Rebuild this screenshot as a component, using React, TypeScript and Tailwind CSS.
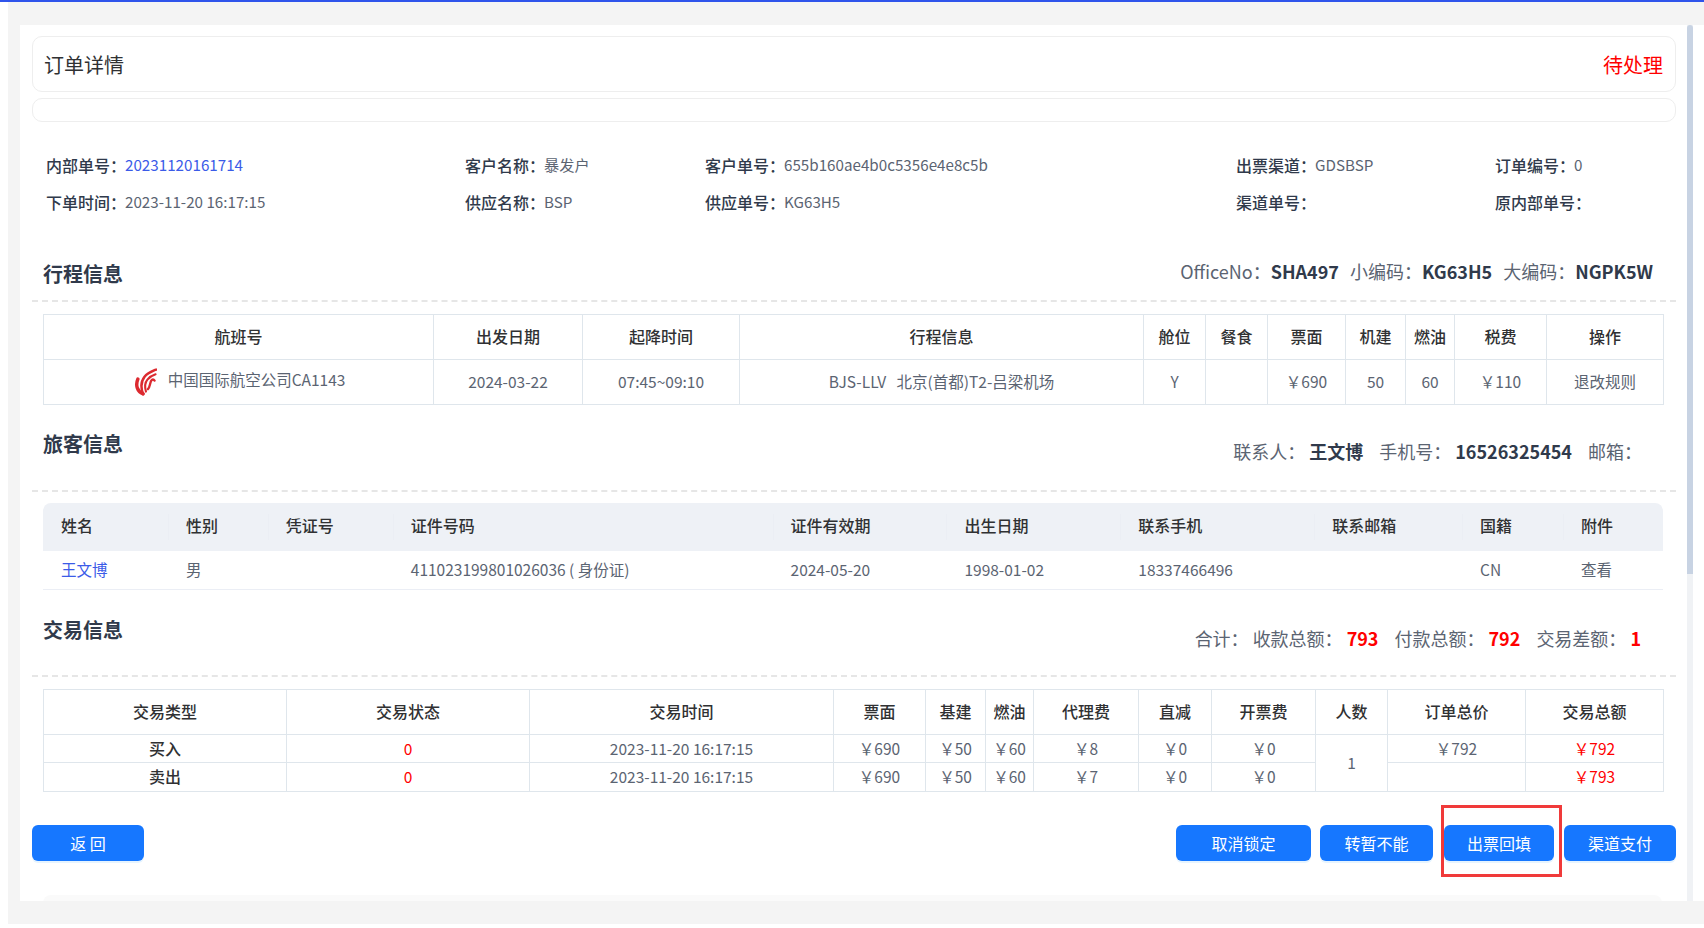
const flightHead = ['航班号', '出发日期', '起降时间', '行程信息', '舱位', '餐食', '票面', '机建', '燃油', '税费', '操作']
const flightCols = ['w-[390px]', 'w-[149px]', 'w-[157px]', 'w-[404px]', 'w-[62px]', 'w-[62px]', 'w-[78px]', 'w-[60px]', 'w-[49px]', 'w-[92px]', 'w-[117px]']
const paxCols = [
  { w: 'w-[125px]', head: '姓名', value: '王文博' },
  { w: 'w-[100px]', head: '性别', value: '男' },
  { w: 'w-[125px]', head: '凭证号', value: '' },
  { w: 'w-[380px]', head: '证件号码', value: '411023199801026036 ( 身份证)' },
  { w: 'w-[174px]', head: '证件有效期', value: '2024-05-20' },
  { w: 'w-[174px]', head: '出生日期', value: '1998-01-02' },
  { w: 'w-[194px]', head: '联系手机', value: '18337466496' },
  { w: 'w-[148px]', head: '联系邮箱', value: '' },
  { w: 'w-[101px]', head: '国籍', value: 'CN' },
  { w: 'w-[100px]', head: '附件', value: '查看' },
]
const tradeHead = ['交易类型', '交易状态', '交易时间', '票面', '基建', '燃油', '代理费', '直减', '开票费', '人数', '订单总价', '交易总额']
const tradeCols = ['w-[243px]', 'w-[243px]', 'w-[304px]', 'w-[92px]', 'w-[60px]', 'w-[48px]', 'w-[105px]', 'w-[73px]', 'w-[104px]', 'w-[72px]', 'w-[138px]', 'w-[138px]']

const cell = 'border border-[#dfe6ec] text-center p-0 font-normal'
const headCell = 'border border-[#dfe6ec] text-center p-0 pb-[3px] text-[16px] font-medium text-[#303133]'
const typeCell = 'border border-[#dfe6ec] text-center p-0 pb-[2px] text-[16px] font-medium text-[#303133]'

function Info({ label, value, link }: { label: string; value?: string; link?: boolean }) {
  return (
    <div className="flex items-center h-[37px] whitespace-nowrap">
      <span className="text-[16px] font-medium text-[#303a4b] shrink-0 -mr-[1px]">{label}</span>
      <span className={link ? 'text-[15.2px] text-[#3b5be8]' : 'text-[15.2px] text-[#5b6472]'}>{value}</span>
    </div>
  )
}

function AirChinaLogo() {
  return (
    <svg viewBox="0 0 24 28" className="w-[23px] h-[28px] shrink-0" fill="none" stroke="#dc2a30" strokeLinecap="round">
      <path d="M4 11C1.5 17 3 24 9.5 26.5" strokeWidth="3.6" />
      <path d="M9.5 26.5C7 20 7.5 13 11 8.5C14 4.8 18.5 3 23 1" strokeWidth="2.6" />
      <path d="M12.5 24C11 19 11.5 14.5 14 11.5C16.5 8.5 19.5 7 22.5 6" strokeWidth="2.2" />
      <path d="M14.5 21.5C17 19 16.5 15 18 12.5C19 11 20.5 11 21.5 12.5" strokeWidth="2.4" />
    </svg>
  )
}

function Btn({ children, className }: { children: string; className: string }) {
  return (
    <button className={`h-[36px] rounded-[6px] bg-[#1677ff] text-white text-[16px] shadow-[0_2px_0_rgba(5,145,255,0.1)] ${className}`}>
      {children}
    </button>
  )
}

export default function App() {
  return (
    <div className="w-[1704px] h-[928px] flex flex-col bg-white overflow-hidden font-['Noto_Sans_CJK_SC','Noto_Sans',sans-serif] text-[#5b6472]">
      <div className="h-[2px] bg-[#2f54eb] shrink-0" />
      <div className="ml-[8px] h-[922px] bg-[#f4f4f4] pt-[23px] pl-[12px]">
        <div className="h-[876px] bg-white flex overflow-hidden">
          <div className="w-[1667px] shrink-0 pt-[11px] pl-[12px] pr-[11px]">
            {/* title cards */}
            <div className="h-[56px] pt-[2px] border border-[#eeeeee] rounded-[10px] flex items-center justify-between pl-[11px] pr-[12px]">
              <span className="text-[20px] text-[#303133]">订单详情</span>
              <span className="text-[20px] text-[#ff0000]">待处理</span>
            </div>
            <div className="h-[24px] mt-[6px] border border-[#eeeeee] rounded-[10px]" />

            {/* base info */}
            <div className="grid grid-cols-[419px_240px_531px_259px_1fr] mt-[24px] mb-[36px] pl-[14px]">
              <Info label="内部单号：" value="20231120161714" link />
              <Info label="客户名称：" value="暴发户" />
              <Info label="客户单号：" value="655b160ae4b0c5356e4e8c5b" />
              <Info label="出票渠道：" value="GDSBSP" />
              <Info label="订单编号：" value="0" />
              <Info label="下单时间：" value="2023-11-20 16:17:15" />
              <Info label="供应名称：" value="BSP" />
              <Info label="供应单号：" value="KG63H5" />
              <Info label="渠道单号：" />
              <Info label="原内部单号：" />
            </div>

            {/* 行程信息 */}
            <div className="h-[46px] border-b-2 border-dashed border-[#e6e6e6] flex justify-between pl-[11px] pr-[23px]">
              <h3 className="text-[20px] leading-[36px] font-semibold text-[#303a4b]">行程信息</h3>
              <div className="-mt-[3px] h-[36px] leading-[36px] text-[18px] text-[#5b6472] flex gap-[11px]">
                <span>OfficeNo：<b className="font-semibold text-[#303a4b]">SHA497</b></span>
                <span>小编码：<b className="font-semibold text-[#303a4b]">KG63H5</b></span>
                <span>大编码：<b className="font-semibold text-[#303a4b]">NGPK5W</b></span>
              </div>
            </div>
            <table className="table-fixed border-collapse w-[1620px] mt-[12px] ml-[11px] text-[15.5px]">
              <colgroup>
                {flightCols.map((w, i) => <col key={i} className={w} />)}
              </colgroup>
              <thead>
                <tr className="h-[45px]">
                  {flightHead.map(h => <th key={h} className={headCell}>{h}</th>)}
                </tr>
              </thead>
              <tbody>
                <tr className="h-[45px]">
                  <td className={cell}>
                    <div className="flex items-center justify-center gap-[11px] pl-[2px] -mt-[1px]">
                      <AirChinaLogo />
                      <span className="-mt-[3px]">中国国际航空公司CA1143</span>
                    </div>
                  </td>
                  <td className={cell}>2024-03-22</td>
                  <td className={cell}>07:45~09:10</td>
                  <td className={cell}>BJS-LLV&nbsp;&nbsp;&nbsp;北京(首都)T2-吕梁机场</td>
                  <td className={cell}>Y</td>
                  <td className={cell}></td>
                  <td className={cell}>￥690</td>
                  <td className={cell}>50</td>
                  <td className={cell}>60</td>
                  <td className={cell}>￥110</td>
                  <td className={cell}>退改规则</td>
                </tr>
              </tbody>
            </table>

            {/* 旅客信息 */}
            <div className="mt-[21px] h-[66px] border-b-2 border-dashed border-[#e6e6e6] flex justify-between pl-[11px] pr-[34px]">
              <h3 className="text-[20px] leading-[36px] font-semibold text-[#303a4b]">旅客信息</h3>
              <div className="mt-[7px] h-[36px] leading-[36px] text-[18px] text-[#5b6472] flex gap-[16px]">
                <span>联系人：<b className="ml-[4px] font-semibold text-[#303a4b]">王文博</b></span>
                <span>手机号：<b className="ml-[4px] font-semibold text-[#303a4b]">16526325454</b></span>
                <span>邮箱：</span>
              </div>
            </div>
            <div className="mt-[11px] ml-[11px] w-[1620px]">
              <div className="flex h-[48px] items-center bg-[#eef1f6] rounded-t-[8px] text-[16px] font-medium text-[#303133]">
                {paxCols.map((c, i) => (
                  <div key={c.head} className={`${c.w} h-[26px] flex items-center pb-[4px] ${i > 0 ? 'pl-[17px] border-l border-[#ebeef4]' : 'pl-[18px]'}`}>
                    {c.head}
                  </div>
                ))}
              </div>
              <div className="flex h-[39px] items-center border-b border-[#ebeef5] text-[15.5px]">
                {paxCols.map((c, i) => (
                  <div key={c.head} className={`${c.w} pl-[18px] ${i === 0 ? 'text-[#3b5be8]' : ''}`}>{c.value}</div>
                ))}
              </div>
            </div>

            {/* 交易信息 */}
            <div className="mt-[22px] h-[65px] border-b-2 border-dashed border-[#e6e6e6] flex justify-between pl-[11px] pr-[35px]">
              <h3 className="text-[20px] leading-[36px] font-semibold text-[#303a4b]">交易信息</h3>
              <div className="mt-[8px] h-[36px] leading-[36px] text-[18px] text-[#5b6472] flex gap-[16px]">
                <span className="-mr-[12px]">合计：</span>
                <span>收款总额：<b className="ml-[4px] font-semibold text-[#ff0000]">793</b></span>
                <span>付款总额：<b className="ml-[4px] font-semibold text-[#ff0000]">792</b></span>
                <span>交易差额：<b className="ml-[4px] font-semibold text-[#ff0000]">1</b></span>
              </div>
            </div>
            <table className="table-fixed border-collapse w-[1620px] mt-[12px] ml-[11px] text-[15.5px]">
              <colgroup>
                {tradeCols.map((w, i) => <col key={i} className={w} />)}
              </colgroup>
              <thead>
                <tr className="h-[45px]">
                  {tradeHead.map(h => <th key={h} className={headCell}>{h}</th>)}
                </tr>
              </thead>
              <tbody>
                <tr className="h-[28px]">
                  <td className={typeCell}>买入</td>
                  <td className={`${cell} text-[#ff0000]`}>0</td>
                  <td className={cell}>2023-11-20 16:17:15</td>
                  <td className={cell}>￥690</td>
                  <td className={cell}>￥50</td>
                  <td className={cell}>￥60</td>
                  <td className={cell}>￥8</td>
                  <td className={cell}>￥0</td>
                  <td className={cell}>￥0</td>
                  <td className={cell} rowSpan={2}>1</td>
                  <td className={cell}>￥792</td>
                  <td className={`${cell} text-[#ff0000]`}>￥792</td>
                </tr>
                <tr className="h-[29px]">
                  <td className={typeCell}>卖出</td>
                  <td className={`${cell} text-[#ff0000]`}>0</td>
                  <td className={cell}>2023-11-20 16:17:15</td>
                  <td className={cell}>￥690</td>
                  <td className={cell}>￥50</td>
                  <td className={cell}>￥60</td>
                  <td className={cell}>￥7</td>
                  <td className={cell}>￥0</td>
                  <td className={cell}>￥0</td>
                  <td className={cell}></td>
                  <td className={`${cell} text-[#ff0000]`}>￥793</td>
                </tr>
              </tbody>
            </table>

            {/* actions */}
            <div className="mt-[33px] flex">
              <Btn className="w-[112px]">返 回</Btn>
              <div className="relative ml-auto flex">
                <Btn className="w-[135px]">取消锁定</Btn>
                <Btn className="w-[113px] ml-[9px]">转暂不能</Btn>
                <Btn className="w-[110px] ml-[11px]">出票回填</Btn>
                <Btn className="w-[112px] ml-[10px]">渠道支付</Btn>
                <div className="absolute left-[265px] -top-[20px] w-[121px] h-[72px] border-[3px] border-[#f03a3a]" />
              </div>
            </div>
            <div className="mt-[34px] ml-[11px] w-[1619px] h-[20px] bg-[#fafafa] rounded-t-[8px]" />
          </div>

          {/* scrollbar */}
          <div className="w-[6px] h-full bg-[#f0f2f5] shrink-0">
            <div className="h-[549px] bg-[#c8d3e3] rounded-t-[3px]" />
          </div>
        </div>
      </div>
    </div>
  )
}
